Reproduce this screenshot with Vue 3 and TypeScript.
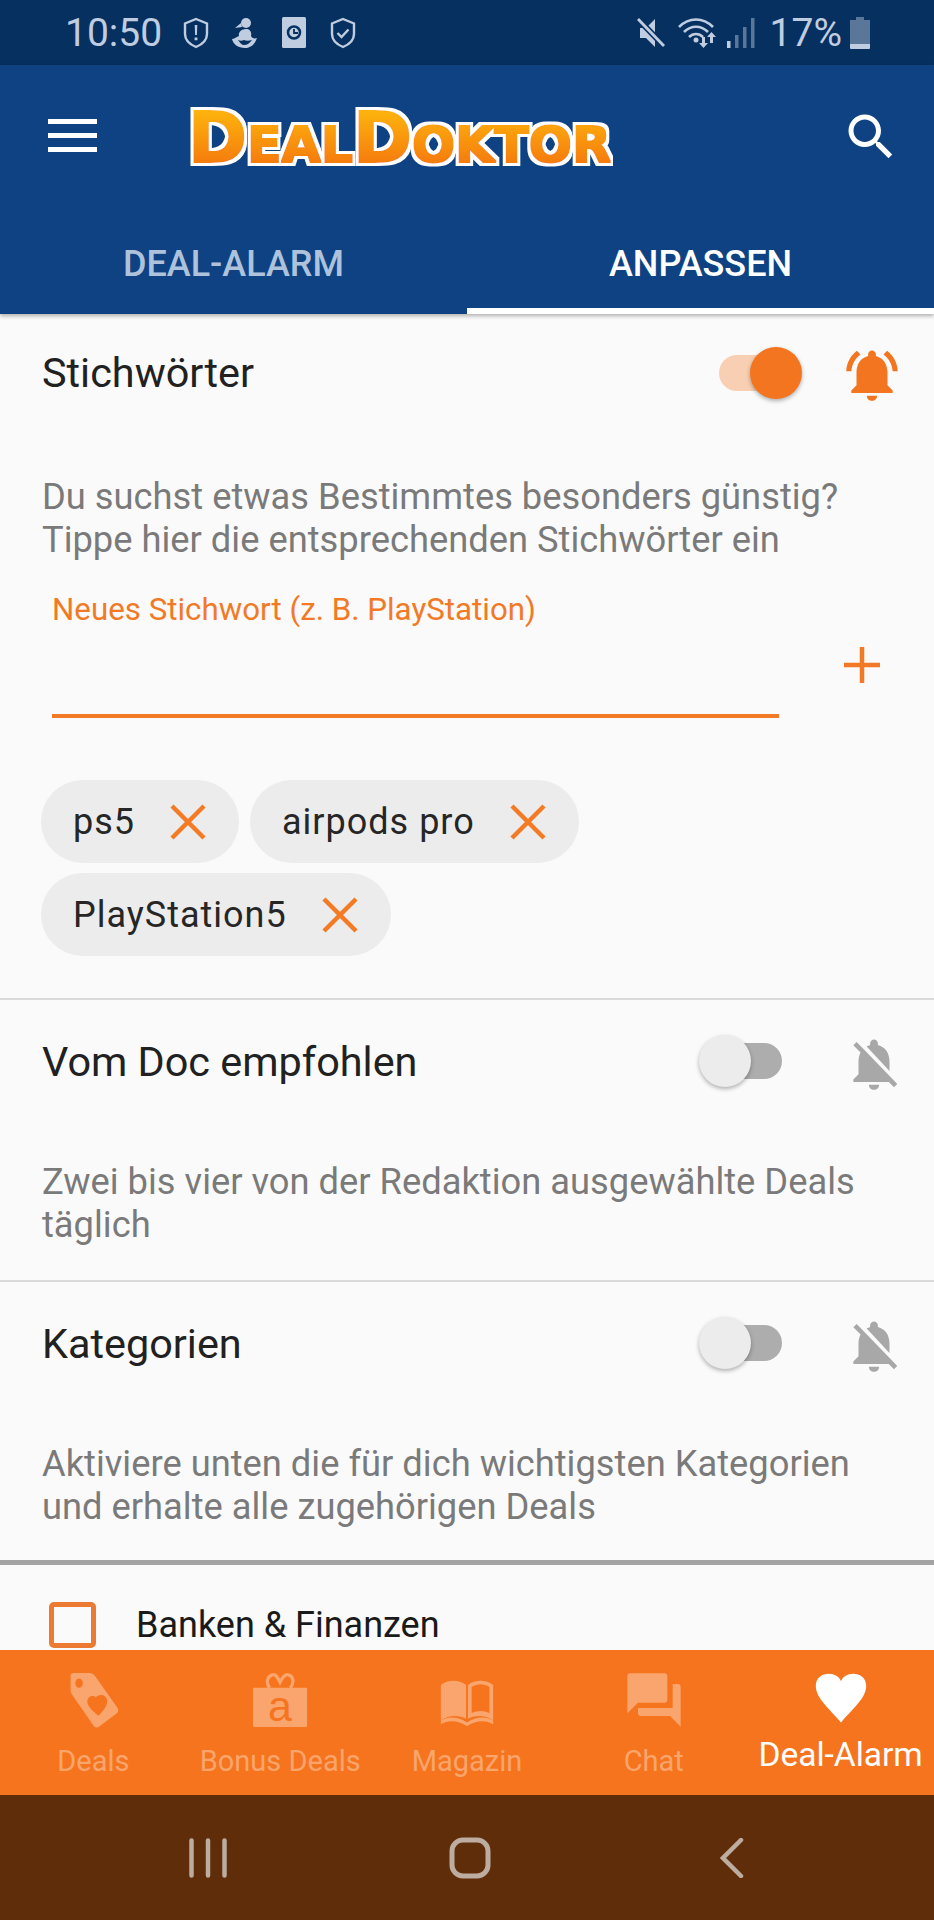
<template>
<div class="screen">
  <div class="status">
    <span class="clock">10:50</span>
    <svg class="si shield" viewBox="0 0 26 32"><path d="M13 2 24 6.500V17C24 23 19 27.500 13 30 7 27.500 2 23 2 17V6.500Z" fill="none" stroke="currentColor" stroke-width="2.400"/><path d="M11.700 8h2.600l-.4 10h-1.800zM11.600 20.500h2.800v2.800h-2.800z" fill="currentColor"/></svg>
    <svg class="si figure" viewBox="0 0 26 32"><circle cx="15" cy="6" r="5" fill="currentColor"/><path d="M10 6 4 11 11 10ZM15 12C10 12 7 16 8 19 5 20 3 22 1 22 2 27 7 31 14 31 20 31 24 27 26 21 23 22 21 21 20 19 21 15 19 12 15 12ZM7 23C9 24 11 24 13 23 15 24 18 24 21 23 19 26 16 28 13 28 11 28 9 26 7 23Z" fill="currentColor" fill-rule="evenodd"/></svg>
    <svg class="si square" viewBox="0 0 24 31"><rect width="24" height="31" rx="1.500" fill="currentColor"/><circle cx="12" cy="15.500" r="6" fill="none" stroke="#06305f" stroke-width="2.500"/><path d="M12 12v4h4" fill="none" stroke="#06305f" stroke-width="1.800"/></svg>
    <svg class="si shield" viewBox="0 0 26 32"><path d="M13 2 24 6.500V17C24 23 19 27.500 13 30 7 27.500 2 23 2 17V6.500Z" fill="none" stroke="currentColor" stroke-width="2.400"/><path d="M7.500 16 11.500 20 18.500 12.500" fill="none" stroke="currentColor" stroke-width="2.400"/></svg>
    <div class="status-right">
      <svg class="si mute" viewBox="0 0 30 30"><path d="M4 10h6l9-9v28l-9-9H4Z" fill="currentColor"/><path d="M2 1 28 28" stroke="#06305f" stroke-width="6"/><path d="M2 1 28 28" stroke="currentColor" stroke-width="2.800"/></svg>
      <svg class="si wifi" viewBox="0 0 40 30"><g fill="none" stroke="currentColor" stroke-width="2.600"><path d="M1 9C11 -1 25 -1 35 9"/><path d="M6 14C13 7 23 7 30 14"/><path d="M11 19C15 15 21 15 25 19"/></g><circle cx="18" cy="22" r="2.500" fill="currentColor"/><path d="M24 19h3v6h3l-4.500 5-4.500-5h3ZM33.500 14l4.500 5h-3v6h-3v-6h-3Z" fill="currentColor"/></svg>
      <svg class="si signal" viewBox="0 0 28 30"><rect x="0" y="23" width="3.500" height="7" fill="currentColor"/><g fill="currentColor" opacity=".45"><rect x="8" y="17" width="3.500" height="13"/><rect x="16" y="9" width="3.500" height="21"/><rect x="24" y="0" width="3.500" height="30"/></g></svg>
      <span class="percent">17%</span>
      <svg class="si battery" viewBox="0 0 20 32"><path d="M6 0h8v3h6v24H0V3h6Z" fill="currentColor" opacity=".45"/><path d="M0 27h20v4a1 1 0 0 1-1 1H1a1 1 0 0 1-1-1Z" fill="currentColor"/></svg>
    </div>
  </div>

  <header class="appbar">
    <div class="toolbar">
      <div class="burger"><span></span><span></span><span></span></div>
      <svg class="logo" viewBox="0 -20 427 100">
        <defs>
          <linearGradient id="logoFill" x1="0" y1="0" x2="0" y2="1">
            <stop offset="0" stop-color="#ffc107"/>
            <stop offset="1" stop-color="#f26a12"/>
          </linearGradient>
          <filter id="logoFat" x="-5%" y="-20%" width="110%" height="140%">
            <feMorphology in="SourceGraphic" operator="dilate" radius="1.300" result="fat"/>
            <feMorphology in="SourceAlpha" operator="dilate" radius="3.800" result="wide"/>
            <feFlood flood-color="#fff"/>
            <feComposite in2="wide" operator="in" result="outline"/>
            <feMerge>
              <feMergeNode in="outline"/>
              <feMergeNode in="fat"/>
            </feMerge>
          </filter>
        </defs>
        <text class="logo-text" x="2" y="55" textLength="423" lengthAdjust="spacingAndGlyphs" filter="url(#logoFat)"><tspan font-size="70">D</tspan><tspan font-size="50">EAL</tspan><tspan font-size="70">D</tspan><tspan font-size="50">OKTOR</tspan></text>
      </svg>
      <svg class="search" viewBox="0 0 24 24"><path d="M15.500 14h-.79l-.28-.27C15.410 12.590 16 11.110 16 9.500 16 5.910 13.090 3 9.500 3S3 5.910 3 9.500 5.910 16 9.500 16c1.610 0 3.090-.59 4.230-1.570l.27.28v.79l5 4.990L20.490 19l-4.990-5zm-6 0C7.010 14 5 11.990 5 9.500S7.010 5 9.500 5 14 7.010 14 9.500 11.990 14 9.500 14z" fill="#fff"/></svg>
    </div>
    <div class="tabs">
      <div class="tab">DEAL-ALARM</div>
      <div class="tab active">ANPASSEN</div>
    </div>
  </header>

  <main class="content">
    <section class="sec first">
      <div class="head">
        <span class="title">Stichwörter</span>
        <div class="switch on"><i></i></div>
        <svg class="bell" viewBox="0 0 24 24"><path :d="bellOn" fill="#f47520"/></svg>
      </div>
      <p class="desc">Du suchst etwas Bestimmtes besonders günstig?<br>Tippe hier die entsprechenden Stichwörter ein</p>
      <div class="field">
        <div class="input">
          <label>Neues Stichwort (z. B. PlayStation)</label>
        </div>
        <svg class="plus" viewBox="0 0 40 40"><path d="M20 2v36M2 20h36" stroke="#f27a26" stroke-width="4.500"/></svg>
      </div>
      <div class="chips">
        <div v-for="chip in chips" :key="chip" class="chip">
          <span>{{ chip }}</span>
          <svg viewBox="0 0 36 36"><path d="M2 2 34 34M34 2 2 34" stroke="#f47a24" stroke-width="4.500"/></svg>
        </div>
      </div>
    </section>

    <section v-for="s in sections" :key="s.title" :class="['sec', s.cls]">
      <div class="head">
        <span class="title">{{ s.title }}</span>
        <div class="switch"><i></i></div>
        <svg class="bell off" viewBox="0 0 24 24"><path :d="bellOff" fill="#a8a8a8"/></svg>
      </div>
      <p class="desc"><template v-for="(line, i) in s.lines" :key="i"><br v-if="i">{{ line }}</template></p>
    </section>

    <div class="check-row">
      <span class="box"></span>
      <span>Banken &amp; Finanzen</span>
    </div>
  </main>

  <nav class="bottom">
    <div class="item">
      <svg viewBox="0 0 60 60"><path fill-rule="evenodd" d="M9 1h17q4 0 6 3l24 34q2 3 0 6L37 58q-3 3-6 0L8 25q-2-3-2-5V4q0-3 3-3ZM15 7a4 5 0 1 0 .1 0ZM33 27c-3-3-10-1-9 6 1 5 7 10 12 14 5-6 10-11 9-17-1-6-8-7-12-3Z"/></svg>
      <span>Deals</span>
    </div>
    <div class="item">
      <svg class="gift" viewBox="0 0 60 72"><path d="M19 17C14 11 17 4 22 3 26 2 28 7 30 11 32 7 35 2 39 3 44 4 46 11 41 17" fill="none" stroke="currentColor" stroke-width="3.500"/><rect x="1" y="17" width="58" height="42" rx="1"/><text x="30" y="53" text-anchor="middle" class="gift-a">a</text></svg>
      <span>Bonus Deals</span>
    </div>
    <div class="item">
      <svg viewBox="0 0 60 60"><path fill-rule="evenodd" d="M2 14C10 8 21 8 29 14V50C21 46 10 46 2 52ZM31 14C39 8 50 8 58 14V52C50 46 39 46 31 50ZM35 16V44C41 41 48 41 54 44V16C48 12 41 12 35 16Z"/><path d="M2 52C10 47 21 48 30 54 39 48 50 47 58 52V56C50 51 39 52 30 58 21 52 10 51 2 56Z"/></svg>
      <span>Magazin</span>
    </div>
    <div class="item">
      <svg class="chat" viewBox="0 0 24 24"><path d="M21 6h-2v9H6v2c0 .55.45 1 1 1h11l4 4V7c0-.55-.45-1-1-1zm-4 6V3c0-.55-.45-1-1-1H3c-.55 0-1 .45-1 1v14l4-4h10c.55 0 1-.45 1-1z"/></svg>
      <span>Chat</span>
    </div>
    <div class="item active">
      <svg viewBox="0 0 60 60"><path d="M30 54C18 40 3 28 3 15 3 6 10 2 17 2 23 2 28 5 30 10 32 5 37 2 43 2 50 2 57 6 57 15 57 28 42 40 30 54Z"/></svg>
      <span>Deal-Alarm</span>
    </div>
  </nav>

  <div class="sysnav">
    <svg class="recents" viewBox="0 0 38 40"><path d="M2.500 2.500v35M19 2.500v35M35.500 2.500v35" stroke="#bdaca0" stroke-width="4.500" stroke-linecap="round"/></svg>
    <svg class="home" viewBox="0 0 42 42"><rect x="3" y="3" width="36" height="36" rx="11" fill="none" stroke="#bdaca0" stroke-width="5"/></svg>
    <svg class="back" viewBox="0 0 24 40"><path d="M21 2 3 20 21 38" fill="none" stroke="#bdaca0" stroke-width="4.500" stroke-linecap="round"/></svg>
  </div>
</div>
</template>

<script setup lang="ts">
interface Section {
  title: string;
  lines: string[];
  cls: string;
}

const chips: string[] = ['ps5', 'airpods pro', 'PlayStation5'];

const sections: Section[] = [
  {
    title: 'Vom Doc empfohlen',
    lines: ['Zwei bis vier von der Redaktion ausgewählte Deals', 'täglich'],
    cls: 'second',
  },
  {
    title: 'Kategorien',
    lines: ['Aktiviere unten die für dich wichtigsten Kategorien', 'und erhalte alle zugehörigen Deals'],
    cls: 'third',
  },
];

const bellOn = 'M7.58 4.08L6.15 2.65C3.75 4.48 2.17 7.3 2.03 10.5h2c.15-2.65 1.51-4.97 3.55-6.42zm12.39 6.42h2c-.15-3.2-1.73-6.02-4.12-7.85l-1.42 1.43c2.02 1.45 3.39 3.77 3.54 6.42zM18 11c0-3.07-1.64-5.64-4.5-6.32V4c0-.83-.67-1.5-1.5-1.5s-1.5.67-1.5 1.5v.68C7.63 5.36 6 7.92 6 11v5l-2 2v1h16v-1l-2-2v-5zm-6 11c.14 0 .27-.01.4-.04.65-.14 1.18-.58 1.44-1.18.1-.24.15-.5.15-.78h-4c.01 1.1.9 2 2.01 2z';
const bellOff = 'M20 18.69L7.84 6.14 5.27 3.49 4 4.76l2.8 2.8v.01c-.52.99-.8 2.16-.8 3.42v5l-2 2v1h13.73l2 2L21 19.72l-1-1.03zM12 22c1.11 0 2-.89 2-2h-4c0 1.11.89 2 2 2zm6-7.32V11c0-3.08-1.64-5.64-4.5-6.32V4c0-.83-.67-1.5-1.5-1.5s-1.5.67-1.5 1.5v.68c-.15.03-.29.08-.42.12-.1.03-.2.07-.3.11h-.01c-.2.08-.4.17-.59.27-.01 0-.01 0-.02.01L18 14.68z';
</script>

<style scoped>
.screen {
  display: flex;
  flex-direction: column;
  width: 934px;
  height: 1920px;
  overflow: hidden;
  background: #fafafa;
  font-family: Roboto, "Liberation Sans", sans-serif;
}
.status {
  display: flex;
  align-items: center;
  flex: none;
  height: 65px;
  padding-left: 65px;
  background: #06305f;
  color: #c0cde0;
}
.clock {
  font-size: 39px;
  margin-right: 21px;
}
.si {
  display: block;
  flex: none;
}
.shield {
  width: 26px;
  height: 32px;
  margin-right: 22px;
}
.figure {
  width: 26px;
  height: 32px;
  margin-right: 25px;
}
.square {
  width: 24px;
  height: 31px;
  margin-right: 24px;
}
.status-right {
  display: flex;
  align-items: center;
  margin-left: auto;
  padding-right: 64px;
}
.mute {
  width: 30px;
  height: 30px;
  margin-right: 12px;
}
.wifi {
  width: 40px;
  height: 30px;
  margin-right: 9px;
}
.signal {
  width: 28px;
  height: 30px;
  margin-right: 15px;
}
.percent {
  font-size: 39px;
  margin-right: 8px;
}
.battery {
  width: 20px;
  height: 32px;
}
.appbar {
  flex: none;
  position: relative;
  background: #0e4282;
  box-shadow: 0 2px 4px rgba(0, 0, 0, .3);
}
.toolbar {
  display: flex;
  align-items: center;
  height: 144px;
  padding: 0 33px 0 48px;
}
.burger {
  display: flex;
  flex-direction: column;
  gap: 9px;
  width: 49px;
  margin-top: -4px;
}
.burger span {
  height: 5px;
  background: #fff;
}
.logo {
  width: 427px;
  height: 100px;
  margin-left: 89px;
}
.logo-text {
  font-family: "DejaVu Sans", sans-serif;
  font-weight: 700;
  fill: url(#logoFill);
}
.search {
  width: 60px;
  height: 60px;
  margin-left: auto;
}
.tabs {
  display: grid;
  grid-template-columns: 1fr 1fr;
}
.tab {
  display: flex;
  justify-content: center;
  align-items: center;
  height: 105px;
  padding-top: 10px;
  box-sizing: border-box;
  border-bottom: 6px solid transparent;
  font-size: 36px;
  font-weight: 500;
  color: #aec2dc;
}
.tab.active {
  color: #fff;
  border-color: #fff;
}
.content {
  flex: 1;
  min-height: 0;
  overflow: hidden;
}
.sec {
  padding: 0 42px;
  border-bottom: 2px solid #d9d9d9;
}
.head {
  display: flex;
  align-items: center;
  height: 124px;
}
.first .head {
  height: 118px;
}
.title {
  flex: 1;
  font-size: 41.4px;
  color: #212121;
}
.switch {
  position: relative;
  width: 62px;
  height: 36px;
  margin-right: 61px;
  margin-top: -3px;
  border-radius: 18px;
  background: #adadad;
}
.switch i {
  position: absolute;
  left: -21px;
  top: -8px;
  width: 52px;
  height: 52px;
  border-radius: 50%;
  background: #ececec;
  box-shadow: 0 2px 4px rgba(0, 0, 0, .3);
}
.switch.on {
  width: 62px;
  margin-right: 60px;
  margin-top: 0;
  background: #f8cfb2;
}
.switch.on i {
  left: 31px;
  background: #f47520;
}
.bell {
  width: 62px;
  height: 62px;
  margin-right: -11px;
  margin-top: 4px;
}
.bell.off {
  margin-right: -13px;
}
.desc {
  margin: 36px 0 0;
  font-size: 36.3px;
  line-height: 43px;
  color: #7a7a7a;
}
.first .desc {
  margin-top: 43px;
}
.second {
  padding-bottom: 34px;
}
.third {
  padding-bottom: 32px;
  border-bottom: 5px solid #a3a3a3;
}
.field {
  display: flex;
  align-items: flex-start;
  margin-top: 32px;
  padding-left: 10px;
}
.input {
  width: 727px;
  height: 125px;
  box-sizing: border-box;
  border-bottom: 4px solid #f27a26;
}
.input label {
  font-size: 31.3px;
  line-height: 34px;
  color: #f27a26;
}
.plus {
  width: 40px;
  height: 40px;
  margin: 52px 0 0 63px;
}
.chips {
  display: flex;
  flex-wrap: wrap;
  gap: 10px 11px;
  margin-top: 62px;
  padding-bottom: 42px;
  margin-left: -1px;
}
.chip {
  display: flex;
  align-items: center;
  gap: 35px;
  height: 83px;
  padding: 0 33px 0 32px;
  border-radius: 42px;
  background: #ececec;
  font-size: 36px;
  letter-spacing: 1px;
  color: #262626;
}
.chip svg {
  width: 36px;
  height: 36px;
}
.check-row {
  display: flex;
  align-items: center;
  gap: 40px;
  margin-top: 37px;
  padding-left: 49px;
  font-size: 36px;
  color: #1a1a1a;
}
.box {
  width: 47px;
  height: 46px;
  box-sizing: border-box;
  border: 5px solid #ed7a33;
  border-radius: 5px;
}
.bottom {
  display: grid;
  grid-template-columns: repeat(5, 1fr);
  flex: none;
  height: 145px;
  background: #f6741e;
}
.item {
  display: flex;
  flex-direction: column;
  align-items: center;
  padding-top: 22px;
  font-size: 29px;
  line-height: 34px;
  color: #f9a56d;
  white-space: nowrap;
}
.item svg {
  width: 56px;
  height: 56px;
  fill: currentColor;
  margin-bottom: 16px;
}
.item svg.chat {
  width: 64px;
  height: 64px;
  margin: -4px 0 12px;
}
.item svg.gift {
  height: 67.200px;
  margin-bottom: 4.800px;
}
.gift-a {
  font-family: "Liberation Sans", sans-serif;
  font-size: 46px;
  fill: #f6741e;
}
.item.active {
  color: #fff;
  font-size: 33.500px;
}
.item.active svg {
  margin-bottom: 10px;
}
.sysnav {
  display: flex;
  align-items: center;
  flex: none;
  height: 125px;
  background: #5f2d0a;
}
.recents {
  width: 38px;
  height: 40px;
  margin-left: 189px;
}
.home {
  width: 42px;
  height: 42px;
  margin-left: 222px;
}
.back {
  width: 24px;
  height: 40px;
  margin-left: 229px;
}
</style>
